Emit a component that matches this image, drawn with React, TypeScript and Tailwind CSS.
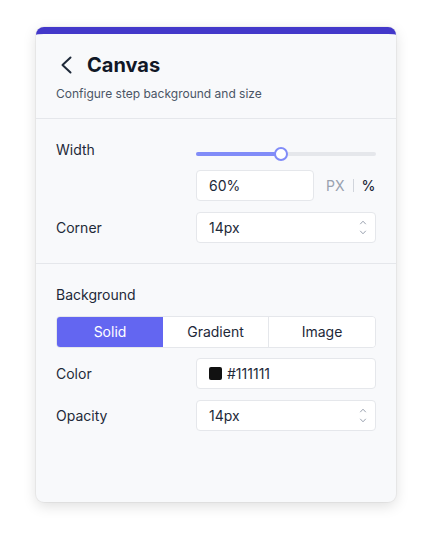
import React from "react";

const Spinner = () => (
  <div className="flex flex-col items-center gap-[5px] text-gray-400">
    <svg width="8" height="5" viewBox="0 0 8 5" fill="none">
      <path d="M1.2 4.2 L4 1.2 L6.8 4.2" stroke="currentColor" strokeWidth="1" />
    </svg>
    <svg width="8" height="5" viewBox="0 0 8 5" fill="none">
      <path d="M1.2 0.8 L4 3.8 L6.8 0.8" stroke="currentColor" strokeWidth="1" />
    </svg>
  </div>
);

export default function App() {
  return (
    <div
      className="min-h-[547px] bg-white flex justify-center pt-[27px]"
      style={{ fontFamily: "Inter, 'Noto Sans', sans-serif" }}
    >
      <div className="w-[360px] h-[475px] bg-[#f8f9fb] rounded-lg border-t-[7px] border-[#4338ca] shadow-[0_4px_14px_rgba(0,0,0,0.13),0_0_0_1px_rgba(0,0,0,0.04)] flex flex-col">
        {/* Header */}
        <div className="px-5 pt-[18px] pb-[16px] border-b border-gray-200">
          <div className="flex items-center gap-[13px] h-[26px]">
            <svg width="16" height="18" viewBox="0 0 16 18" fill="none" className="text-gray-800 ml-[2px]">
              <path d="M12.5 1.5 L4.5 9 L12.5 16.5" stroke="currentColor" strokeWidth="2" strokeLinecap="round" strokeLinejoin="round" />
            </svg>
            <span className="text-[20px] font-bold text-[#111827] leading-none">Canvas</span>
          </div>
          <p className="mt-[8px] text-[12px] leading-4 text-gray-600">Configure step background and size</p>
        </div>

        {/* Section 1 */}
        <div className="px-5 pt-[21px] pb-5 border-b border-gray-200">
          <div className="grid grid-cols-[140px_1fr] items-start">
            <span className="text-sm leading-5 text-gray-800">Width</span>
            <div className="pt-[12px]">
              <div className="relative h-1 rounded-full bg-gray-200">
                <div className="absolute left-0 top-0 h-1 w-[84px] rounded-full bg-[#818cf8]" />
                <div className="absolute left-[78px] top-[-5px] w-[14px] h-[14px] rounded-full bg-white border-2 border-[#818cf8]" />
              </div>
            </div>
          </div>
          <div className="grid grid-cols-[140px_1fr] mt-[10px]">
            <div />
            <div className="flex items-center">
              <div className="w-[118px] h-[31px] bg-white border border-gray-200 rounded flex items-center px-3 text-sm text-gray-800">60%</div>
              <div className="ml-3 flex items-center gap-[8px] text-sm">
                <span className="text-gray-400">PX</span>
                <span className="w-px h-[13px] bg-gray-300" />
                <span className="text-gray-800 font-medium">%</span>
              </div>
            </div>
          </div>
          <div className="grid grid-cols-[140px_1fr] mt-[11px] items-center">
            <span className="text-sm text-gray-800">Corner</span>
            <div className="h-[31px] bg-white border border-gray-200 rounded flex items-center justify-between pl-3 pr-[8px] text-sm text-gray-800">
              <span>14px</span>
              <Spinner />
            </div>
          </div>
        </div>

        {/* Section 2 */}
        <div className="px-5 pt-[21px]">
          <div className="text-sm leading-5 text-gray-800">Background</div>
          <div className="mt-[11px] grid grid-cols-3 h-[32px] rounded overflow-hidden border border-gray-200 text-sm">
            <div className="bg-[#6366f1] text-white flex items-center justify-center">Solid</div>
            <div className="bg-white text-gray-800 flex items-center justify-center border-r border-gray-200">Gradient</div>
            <div className="bg-white text-gray-800 flex items-center justify-center">Image</div>
          </div>
          <div className="grid grid-cols-[140px_1fr] mt-[10px] items-center">
            <span className="text-sm text-gray-800">Color</span>
            <div className="h-[31px] bg-white border border-gray-200 rounded flex items-center pl-3 text-sm text-gray-800 gap-[5px]">
              <span className="w-[13px] h-[13px] rounded-[2px] bg-[#111111]" />
              <span>#111111</span>
            </div>
          </div>
          <div className="grid grid-cols-[140px_1fr] mt-[11px] items-center">
            <span className="text-sm text-gray-800">Opacity</span>
            <div className="h-[31px] bg-white border border-gray-200 rounded flex items-center justify-between pl-3 pr-[8px] text-sm text-gray-800">
              <span>14px</span>
              <Spinner />
            </div>
          </div>
        </div>
      </div>
    </div>
  );
}
